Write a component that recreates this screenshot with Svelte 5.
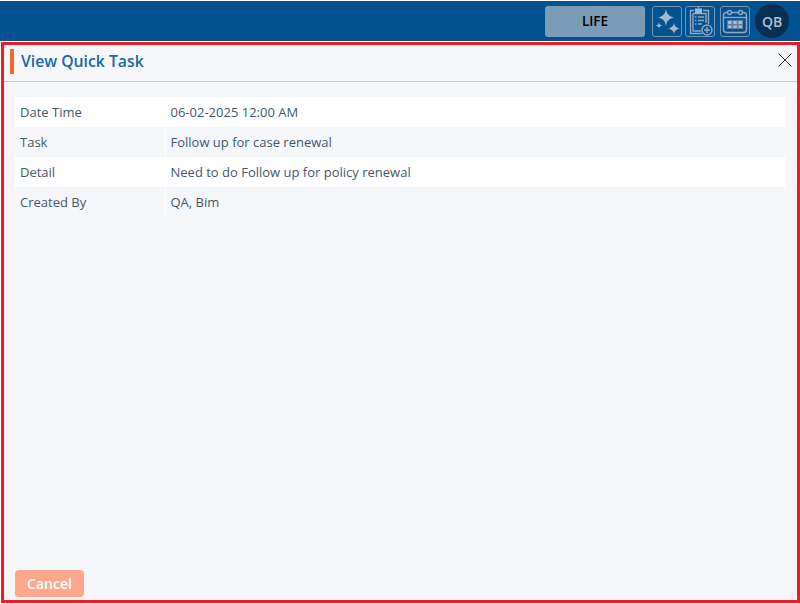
<script>
  const rows = [
    ['Date Time', '06-02-2025 12:00 AM'],
    ['Task', 'Follow up for case renewal'],
    ['Detail', 'Need to do Follow up for policy renewal'],
    ['Created By', 'QA, Bim']
  ];
</script>

<div class="page">
  <header class="topbar">
    <div class="lob">LIFE</div>
    <button class="icon-btn" aria-label="Sparkle">
      <svg width="28" height="30" viewBox="0 0 28 30">
        <path class="fill" d="M13 3 C14 8 15.500 10 21 11.500 C15.500 13 14 15 13 20 C12 15 10.500 13 5 11.500 C10.500 10 12 8 13 3Z" />
        <path class="fill" d="M21 16.500 C21.500 20 22.500 21 26.500 22.500 C22.500 24 21.500 25 21 28.500 C20.500 25 19.500 24 15.500 22.500 C19.500 21 20.500 20 21 16.500Z" />
        <path class="fill" d="M6 16 C6.300 18.300 7 19 9.500 19.500 C7 20 6.300 20.700 6 23 C5.700 20.700 5 20 2.500 19.500 C5 19 5.700 18.300 6 16Z" />
      </svg>
    </button>
    <button class="icon-btn" aria-label="Add to clipboard">
      <svg width="28" height="30" viewBox="0 0 28 30">
        <path class="line" d="M8 4.500H4.500V27.500H16" />
        <path class="line" d="M17 4.500H22.500V18" />
        <path class="line" d="M7 7.500H20V17M7 7.500V25H15" />
        <path class="fill" d="M9 2.500H16V7.500H9z" />
        <path class="line" d="M12.500 2.500V0.500" />
        <path class="line" d="M9 11H10.500M12 11H18M9 14.500H10.500M12 14.500H18M9 18H10.500M12 18H16" />
        <circle class="line" cx="21" cy="24" r="5" />
        <path class="line" d="M21 21V27M18 24H24" />
      </svg>
    </button>
    <button class="icon-btn cal" aria-label="Calendar">
      <svg width="28" height="30" viewBox="0 0 28 30">
        <rect class="line" x="2.500" y="6.500" width="23" height="20" rx="3" />
        <path class="line" d="M2.500 11.500H25.500" />
        <circle class="ring" cx="8.500" cy="6.500" r="2" />
        <circle class="ring" cx="19.500" cy="6.500" r="2" />
        <path class="dots" d="M6 14h16v9H6z" />
        <path class="gaps" d="M7 15h3.500v3H7zM12.300 15h3.500v3h-3.500zM17.500 15H21v3h-3.500zM7 19.500h3.500v2.500H7zM12.300 19.500h3.500v2.500h-3.500zM17.500 19.500H21v2.500h-3.500z" />
      </svg>
    </button>
    <div class="avatar">QB</div>
  </header>

  <main class="dialog">
    <div class="title-row">
      <h1>View Quick Task</h1>
      <button class="close" aria-label="Close">
        <svg width="14" height="14" viewBox="0 0 14 14">
          <path d="M.5 .5L13.500 13.500M13.500 .5L.5 13.500" />
        </svg>
      </button>
    </div>

    <div class="table">
      {#each rows as row}
        <div class="row">
          <div class="label">{row[0]}</div>
          <div class="value">{row[1]}</div>
        </div>
      {/each}
    </div>

    <div class="footer">
      <button class="cancel">Cancel</button>
    </div>
  </main>
</div>

<style>
  :global(body) {
    margin: 0;
    background: #fff;
  }
  .page {
    width: 800px;
    height: 604px;
    display: flex;
    flex-direction: column;
    font-family: "Open Sans", "Noto Sans", sans-serif;
    overflow: hidden;
  }
  .topbar {
    height: 40px;
    box-sizing: border-box;
    margin-top: 1px;
    background: #01528f;
    display: flex;
    align-items: center;
    justify-content: flex-end;
    gap: 3px;
    padding-right: 11px;
    flex: none;
  }
  .lob {
    width: 100px;
    height: 31px;
    margin-right: 4px;
    border-radius: 3px;
    background: #7a9cb6;
    color: #000;
    font-size: 13.5px;
    font-weight: 600;
    display: flex;
    align-items: center;
    justify-content: center;
  }
  .icon-btn {
    width: 30px;
    height: 31px;
    padding: 0;
    box-sizing: border-box;
    background: transparent;
    border: 1px solid #7596b3;
    border-radius: 3px;
    display: flex;
    align-items: center;
    justify-content: center;
  }
  .icon-btn.cal {
    margin-left: 2px;
  }
  .icon-btn svg {
    flex: none;
  }
  .fill {
    fill: #a3b8ca;
  }
  .line {
    fill: none;
    stroke: #8ea9c1;
    stroke-width: 1.4;
  }
  .ring {
    fill: #01528f;
    stroke: #8ea9c1;
    stroke-width: 1.4;
  }
  .dots {
    fill: #5f7f9c;
  }
  .gaps {
    fill: #a9bccd;
  }
  .avatar {
    width: 34px;
    height: 34px;
    margin-left: 2px;
    border-radius: 50%;
    background: #062f54;
    color: #b4bfc9;
    font-size: 14px;
    font-weight: 600;
    display: flex;
    align-items: center;
    justify-content: center;
  }
  .dialog {
    flex: 1;
    margin: 1px 0 1px 1px;
    width: 799px;
    box-sizing: border-box;
    border: 3px solid #ed1c24;
    background: #f6f7fb;
    display: flex;
    flex-direction: column;
    min-height: 0;
  }
  .title-row {
    box-sizing: border-box;
    border-bottom: 1px solid #c9cbd0;
    display: flex;
    align-items: center;
    justify-content: space-between;
    flex: none;
    height: 37px;
  }
  h1 {
    margin: 0 0 4px 6px;
    height: 25px;
    border-left: 4px solid #f8652f;
    padding-left: 7px;
    font-size: 15.75px;
    font-weight: 600;
    line-height: 25px;
    color: #1a67ab;
  }
  .close {
    width: 14px;
    height: 14px;
    padding: 0;
    margin: 0 5px 6px 0;
    background: none;
    border: none;
    display: flex;
  }
  .close path {
    stroke: #333;
    stroke-width: 1;
    fill: none;
  }
  .table {
    margin: 15px 12px 0 11px;
    flex: none;
  }
  .row {
    height: 30px;
    display: flex;
    font-size: 13px;
    color: #44586a;
  }
  .row:nth-child(odd) {
    background: #fff;
  }
  .label {
    width: 145px;
    padding-left: 5px;
    line-height: 30px;
    border-right: 1px solid #fff;
  }
  .value {
    padding-left: 4.5px;
    line-height: 30px;
  }
  .footer {
    margin-top: auto;
    padding: 0 0 3px 11px;
  }
  .cancel {
    width: 69px;
    height: 27px;
    padding: 0;
    border: none;
    border-radius: 4px;
    background: #fea78c;
    color: #fff;
    font-family: inherit;
    font-size: 14px;
    font-weight: 600;
    display: block;
  }
</style>
